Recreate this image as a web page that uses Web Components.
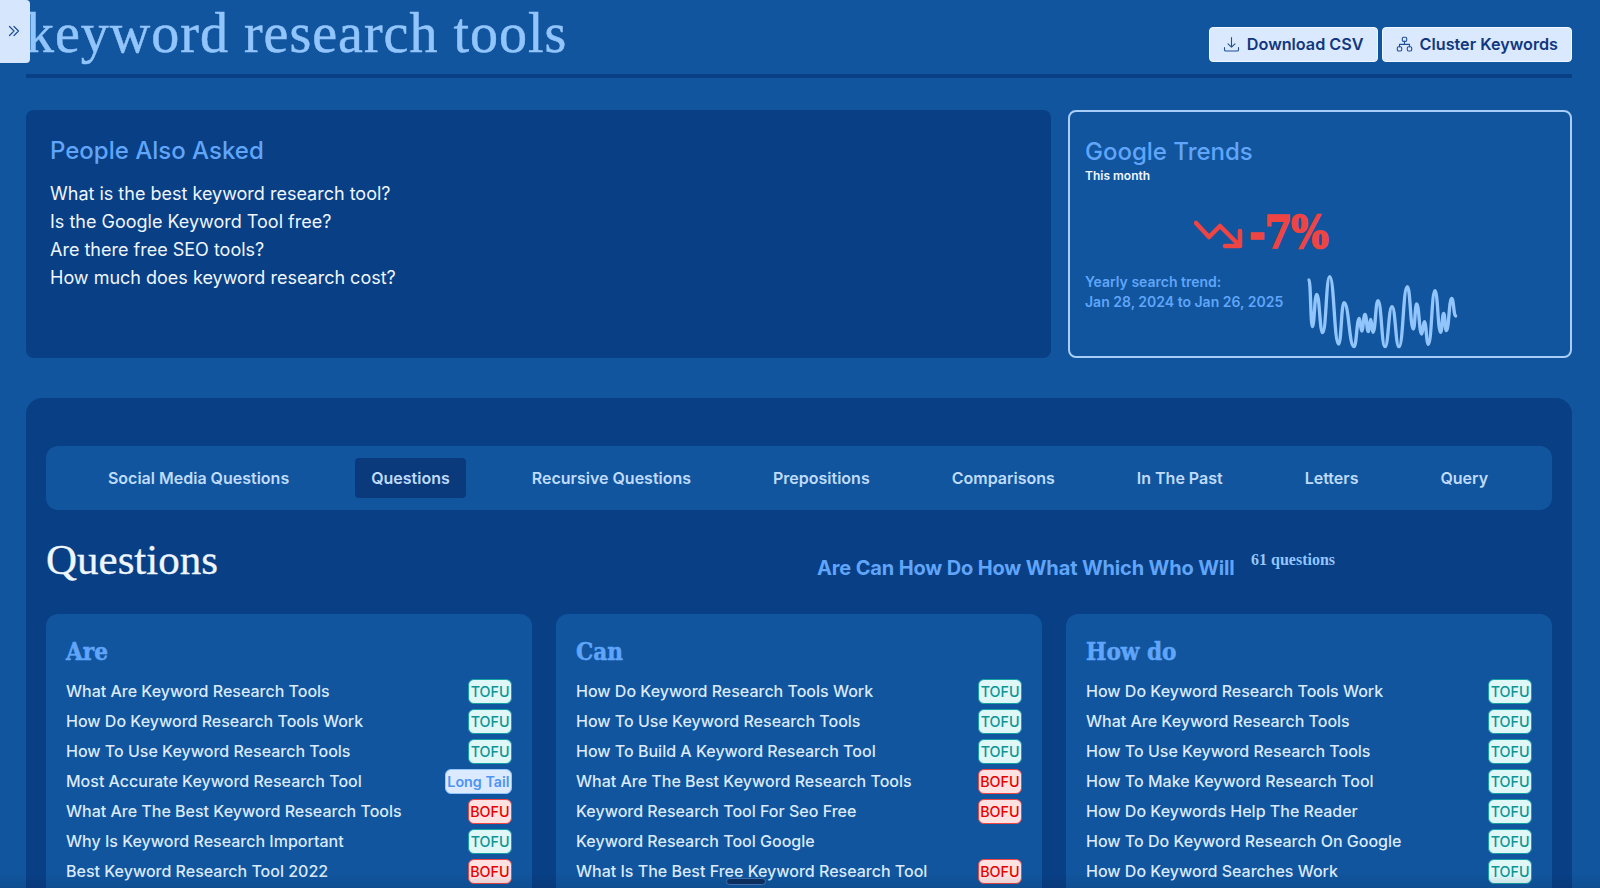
<!DOCTYPE html>
<html lang="en">
<head>
<meta charset="utf-8">
<title>keyword research tools</title>
<style>
    html, body {
        margin: 0;
        height: 888px;
        overflow: hidden;
        background-color: #10559d;
        font-family: 'Inter', 'Liberation Sans', sans-serif;
    }
</style>
</head>
<body>
<report-page>
    <sidebar-toggle></sidebar-toggle>
    <page-header title="keyword research tools">
        <action-button icon="download">Download CSV</action-button>
        <action-button icon="cluster">Cluster Keywords</action-button>
    </page-header>
    <div slot="cards">
        <people-asked>
            <li>What is the best keyword research tool?</li>
            <li>Is the Google Keyword Tool free?</li>
            <li>Are there free SEO tools?</li>
            <li>How much does keyword research cost?</li>
        </people-asked>
        <trends-card></trends-card>
    </div>
    <question-panel>
        <tab-bar active="Questions" tabs="Social Media Questions|Questions|Recursive Questions|Prepositions|Comparisons|In The Past|Letters|Query"></tab-bar>
        <question-heading links="Are Can How Do How What Which Who Will" count="61 questions">Questions</question-heading>
        <question-column heading="Are">
            <question-row tag="TOFU">What Are Keyword Research Tools</question-row>
            <question-row tag="TOFU">How Do Keyword Research Tools Work</question-row>
            <question-row tag="TOFU">How To Use Keyword Research Tools</question-row>
            <question-row tag="Long Tail">Most Accurate Keyword Research Tool</question-row>
            <question-row tag="BOFU">What Are The Best Keyword Research Tools</question-row>
            <question-row tag="TOFU">Why Is Keyword Research Important</question-row>
            <question-row tag="BOFU">Best Keyword Research Tool 2022</question-row>
        </question-column>
        <question-column heading="Can">
            <question-row tag="TOFU">How Do Keyword Research Tools Work</question-row>
            <question-row tag="TOFU">How To Use Keyword Research Tools</question-row>
            <question-row tag="TOFU">How To Build A Keyword Research Tool</question-row>
            <question-row tag="BOFU">What Are The Best Keyword Research Tools</question-row>
            <question-row tag="BOFU">Keyword Research Tool For Seo Free</question-row>
            <question-row>Keyword Research Tool Google</question-row>
            <question-row tag="BOFU">What Is The Best Free Keyword Research Tool</question-row>
        </question-column>
        <question-column heading="How do">
            <question-row tag="TOFU">How Do Keyword Research Tools Work</question-row>
            <question-row tag="TOFU">What Are Keyword Research Tools</question-row>
            <question-row tag="TOFU">How To Use Keyword Research Tools</question-row>
            <question-row tag="TOFU">How To Make Keyword Research Tool</question-row>
            <question-row tag="TOFU">How Do Keywords Help The Reader</question-row>
            <question-row tag="TOFU">How To Do Keyword Research On Google</question-row>
            <question-row tag="TOFU">How Do Keyword Searches Work</question-row>
        </question-column>
    </question-panel>
    <scroll-pill></scroll-pill>
</report-page>

<script>
const SERIF = "'Liberation Serif', 'DejaVu Serif', serif";
const SLAB = "'DejaVu Serif Condensed', 'DejaVu Serif', serif";

class ReportPage extends HTMLElement {
    constructor() {
        super();
        this.attachShadow({ mode: "open" }).innerHTML = `
            <style>
                :host {
                    display: block;
                    height: 888px;
                    overflow: hidden;
                    position: relative;
                    padding: 0 28px 0 26px;
                    box-sizing: border-box;
                }
                ::slotted([slot="cards"]) {
                    display: grid;
                    grid-template-columns: 1025px 504px;
                    gap: 17px;
                    margin: 32px 0 40px;
                }
            </style>
            <slot></slot>
            <slot name="cards"></slot>
            <slot name="panel"></slot>
        `;
    }
    connectedCallback() {
        this.querySelector("question-panel").slot = "panel";
    }
}

class SidebarToggle extends HTMLElement {
    constructor() {
        super();
        this.attachShadow({ mode: "open" }).innerHTML = `
            <style>
                :host {
                    position: absolute;
                    top: 0;
                    left: 0;
                    z-index: 5;
                    width: 30px;
                    height: 63px;
                    background-color: #d5e6fd;
                    border-radius: 0 4px 4px 0;
                    display: flex;
                    align-items: center;
                    justify-content: center;
                }
                svg { display: block; margin-top: -1px; margin-left: -2px; }
            </style>
            <svg width="12" height="12" viewBox="0 0 12 12" fill="none" stroke="#1e4f96" stroke-width="1.2" stroke-linecap="round" stroke-linejoin="round">
                <path d="M1.5 1.5 6 6l-4.5 4.5M6 1.5 10.5 6 6 10.5"/>
            </svg>
        `;
    }
}

class ActionButton extends HTMLElement {
    constructor() {
        super();
        const icons = {
            download: `<path d="M8.5 1.5v9.5M5 7.8l3.5 3.4 3.5-3.4M1.5 11.5v2.2c0 .7.6 1.3 1.3 1.3h11.4c.7 0 1.3-.6 1.3-1.3v-2.2"/>`,
            cluster: `<rect x="6.3" y="1.2" width="4.4" height="4.2" rx="1.2"/><rect x="1.3" y="10.8" width="4.4" height="4.2" rx="1.2"/><rect x="11.3" y="10.8" width="4.4" height="4.2" rx="1.2"/><path d="M8.5 5.4v3M3.5 10.8V8.4h10v2.4"/>`
        };
        const icon = icons[this.getAttribute("icon")];
        this.attachShadow({ mode: "open" }).innerHTML = `
            <style>
                :host {
                    display: flex;
                    align-items: center;
                    gap: 7px;
                    height: 35px;
                    box-sizing: border-box;
                    padding: 0 13px 1px 13px;
                    background-color: #dbe9fe;
                    border: 1px solid #f1f7ff;
                    border-radius: 4px;
                    color: #11377f;
                    font: 600 16.2px 'Inter', sans-serif;
                    white-space: nowrap;
                }
                svg { display: block; }
            </style>
            <svg width="17" height="17" viewBox="0 0 17 17" fill="none" stroke="#1e4f96" stroke-width="1.1" stroke-linecap="round" stroke-linejoin="round">${icon}</svg>
            <slot></slot>
        `;
    }
}

class PageHeader extends HTMLElement {
    constructor() {
        super();
        this.attachShadow({ mode: "open" }).innerHTML = `
            <style>
                :host {
                    display: flex;
                    justify-content: space-between;
                    align-items: flex-start;
                    height: 74px;
                    border-bottom: 4px solid #083f85;
                }
                h1 {
                    margin: 0;
                    padding-top: 3px;
                    font: 400 56px/60px ${SERIF};
                    letter-spacing: 1px;
                    -webkit-text-stroke: 0.5px #93c5fd;
                    color: #93c5fd;
                    white-space: nowrap;
                }
                .actions {
                    display: flex;
                    gap: 4px;
                    margin-top: 27px;
                }
            </style>
            <h1>${this.getAttribute("title")}</h1>
            <div class="actions"><slot></slot></div>
        `;
    }
}

class PeopleAsked extends HTMLElement {
    constructor() {
        super();
        this.attachShadow({ mode: "open" }).innerHTML = `
            <style>
                :host {
                    display: block;
                    height: 248px;
                    box-sizing: border-box;
                    padding: 25px 24px;
                    background-color: #083f85;
                    border-radius: 8px;
                }
                h2 {
                    margin: 0 0 13px;
                    font: 500 24px/32px 'Inter', sans-serif;
                    color: #60a5fa;
                }
                ::slotted(li) {
                    display: block;
                    font: 400 18px/28px 'Inter', sans-serif;
                    color: #eff6ff;
                }
            </style>
            <h2>People Also Asked</h2>
            <slot></slot>
        `;
    }
}

class TrendsCard extends HTMLElement {
    constructor() {
        super();
        const peaks = [[87,60],[97,200],[110,103],[128,218],[149,50],[176,252],[192,128],[222,260],[238,175],[245,213],[255,163],[265,215],[272,178],[279,217],[294,122],[315,260],[336,140],[357,260],[382,80],[400,207],[410,132],[425,222],[433,185],[445,253],[465,92],[482,217],[491,160],[499,212],[515,115],[527,168]];
        let line = `M${peaks[0][0]} ${peaks[0][1]}`;
        for (let i = 1; i < peaks.length; i++) {
            const [x0, y0] = peaks[i - 1];
            const [x1, y1] = peaks[i];
            const mid = (x0 + x1) / 2;
            line += `C${mid} ${y0} ${mid} ${y1} ${x1} ${y1}`;
        }
        this.attachShadow({ mode: "open" }).innerHTML = `
            <style>
                :host {
                    display: block;
                    height: 248px;
                    box-sizing: border-box;
                    padding: 24px 15px 0;
                    border: 2px solid #a9cdf9;
                    border-radius: 8px;
                    color: #60a5fa;
                }
                h2 {
                    margin: 0;
                    font: 500 24px/32px 'Inter', sans-serif;
                }
                .sub {
                    font: 600 12px/16px 'Inter', sans-serif;
                    color: #eff6ff;
                }
                .change {
                    display: flex;
                    align-items: center;
                    gap: 5px;
                    margin: 18px 0 0 109px;
                    height: 56px;
                    color: #ef4444;
                    font: 700 44px/56px ${SLAB};
                    letter-spacing: -1px;
                    -webkit-text-stroke: 1.5px #ef4444;
                }
                .change span { padding-top: 5px; }
                .change svg { margin-top: 14px; }
                .bottom {
                    display: flex;
                    align-items: flex-start;
                    gap: 16px;
                    margin-top: 1px;
                }
                .range {
                    font: 600 14px/20px 'Inter', sans-serif;
                    margin-top: 13px;
                }
                .spark { margin: 1px 0 0 -19px; }
            </style>
            <h2>Google Trends</h2>
            <div class="sub">This month</div>
            <div class="change">
                <svg width="50" height="34" viewBox="0 0 50 34" fill="none" stroke="#ef4444" stroke-width="4.5" stroke-linecap="round" stroke-linejoin="round">
                    <path d="M2 3l13 14 11-11 20 20M46 11v15H31"/>
                </svg>
                <span>-7%</span>
            </div>
            <div class="bottom">
                <div class="range">Yearly search trend:<br>Jan 28, 2024 to Jan 26, 2025</div>
                <svg class="spark" width="190" height="100" viewBox="0 0 570 300" fill="none" stroke="#93c5fd" stroke-width="10" stroke-linecap="round" stroke-linejoin="round">
                    <path d="${line}"/>
                </svg>
            </div>
        `;
    }
}

class QuestionPanel extends HTMLElement {
    constructor() {
        super();
        this.attachShadow({ mode: "open" }).innerHTML = `
            <style>
                :host {
                    display: grid;
                    grid-template-columns: repeat(3, 486px);
                    column-gap: 24px;
                    align-content: start;
                    height: 600px;
                    box-sizing: border-box;
                    padding: 48px 20px 0;
                    background-color: #083f85;
                    border-radius: 16px;
                }
                ::slotted(tab-bar), ::slotted(question-heading) {
                    grid-column: 1 / -1;
                }
            </style>
            <slot></slot>
        `;
    }
}

class TabBar extends HTMLElement {
    constructor() {
        super();
        const active = this.getAttribute("active");
        const tabs = this.getAttribute("tabs").split("|").map(name =>
            `<a class="${name === active ? "on" : ""}">${name}</a>`).join("");
        this.attachShadow({ mode: "open" }).innerHTML = `
            <style>
                :host {
                    display: flex;
                    justify-content: center;
                    align-items: center;
                    gap: 50px;
                    height: 64px;
                    padding-right: 2px;
                    background-color: #10559d;
                    border-radius: 12px;
                }
                a {
                    display: block;
                    padding: 0 16px;
                    font: 600 16px/40px 'Inter', sans-serif;
                    color: #bfdbfe;
                    border-radius: 4px;
                    white-space: nowrap;
                }
                a.on { background-color: #0a3a7c; }
            </style>
            ${tabs}
        `;
    }
}

class QuestionHeading extends HTMLElement {
    constructor() {
        super();
        this.attachShadow({ mode: "open" }).innerHTML = `
            <style>
                :host {
                    display: block;
                    position: relative;
                    height: 104px;
                }
                h2 {
                    margin: 0;
                    padding-top: 26px;
                    font: 400 43px/48px ${SERIF};
                    -webkit-text-stroke: 0.3px #eff6ff;
                    color: #eff6ff;
                }
                .links {
                    position: absolute;
                    left: 771px;
                    top: 44px;
                    font: 700 20px/28px 'Inter', sans-serif;
                    color: #60a5fa;
                    letter-spacing: -0.15px;
                    white-space: nowrap;
                }
                .count {
                    position: absolute;
                    left: 1205px;
                    top: 40px;
                    font: 700 16px/20px ${SERIF};
                    color: #93c5fd;
                    white-space: nowrap;
                }
            </style>
            <h2><slot></slot></h2>
            <span class="links">${this.getAttribute("links")}</span>
            <span class="count">${this.getAttribute("count")}</span>
        `;
    }
}

class QuestionColumn extends HTMLElement {
    constructor() {
        super();
        this.attachShadow({ mode: "open" }).innerHTML = `
            <style>
                :host {
                    display: block;
                    height: 400px;
                    box-sizing: border-box;
                    padding: 21px 20px;
                    background-color: #10559d;
                    border-radius: 12px;
                }
                h3 {
                    margin: 0 0 9px;
                    padding-top: 1px;
                    height: 31px;
                    font: 700 24px/32px ${SLAB};
                    -webkit-text-stroke: 0.5px #60a5fa;
                    color: #60a5fa;
                }
            </style>
            <h3>${this.getAttribute("heading")}</h3>
            <slot></slot>
        `;
    }
}

class QuestionRow extends HTMLElement {
    constructor() {
        super();
        const tag = this.getAttribute("tag");
        const kind = tag ? tag.split(" ")[0].toLowerCase() : "";
        this.attachShadow({ mode: "open" }).innerHTML = `
            <style>
                :host {
                    display: flex;
                    justify-content: space-between;
                    align-items: center;
                    height: 30px;
                    font: 500 16px 'Inter', sans-serif;
                    color: #dbeafe;
                    white-space: nowrap;
                }
                .tag {
                    box-sizing: border-box;
                    height: 25px;
                    padding: 0 1.5px;
                    border: 1px solid;
                    border-radius: 6px;
                    font: 500 14.3px/23px 'Inter', sans-serif;
                }
                .tofu { background: #e0f7f7; border-color: #14a3a3; color: #0d9494; }
                .bofu { background: #fee2e2; border-color: #ef4444; color: #e60000; }
                .long { background: #dbeafe; border-color: #93c5fd; color: #4f94f0; font-weight: 600; }
            </style>
            <slot></slot>
            ${tag ? `<span class="tag ${kind}">${tag}</span>` : ""}
        `;
    }
}

class ScrollPill extends HTMLElement {
    constructor() {
        super();
        this.attachShadow({ mode: "open" }).innerHTML = `
            <style>
                :host {
                    position: absolute;
                    left: 0;
                    right: 0;
                    bottom: 0;
                    height: 14px;
                    background: linear-gradient(rgba(6, 30, 70, 0), rgba(6, 30, 70, 0.14));
                    pointer-events: none;
                }
                div {
                    position: absolute;
                    left: 726px;
                    top: 4px;
                    width: 40px;
                    height: 7px;
                    box-sizing: border-box;
                    background: #0c2f5e;
                    border: 1px solid #3f6fae;
                    border-radius: 4px;
                }
            </style>
            <div></div>
        `;
    }
}

customElements.define("report-page", ReportPage);
customElements.define("sidebar-toggle", SidebarToggle);
customElements.define("action-button", ActionButton);
customElements.define("page-header", PageHeader);
customElements.define("people-asked", PeopleAsked);
customElements.define("trends-card", TrendsCard);
customElements.define("question-panel", QuestionPanel);
customElements.define("tab-bar", TabBar);
customElements.define("question-heading", QuestionHeading);
customElements.define("question-column", QuestionColumn);
customElements.define("question-row", QuestionRow);
customElements.define("scroll-pill", ScrollPill);
</script>
</body>
</html>
